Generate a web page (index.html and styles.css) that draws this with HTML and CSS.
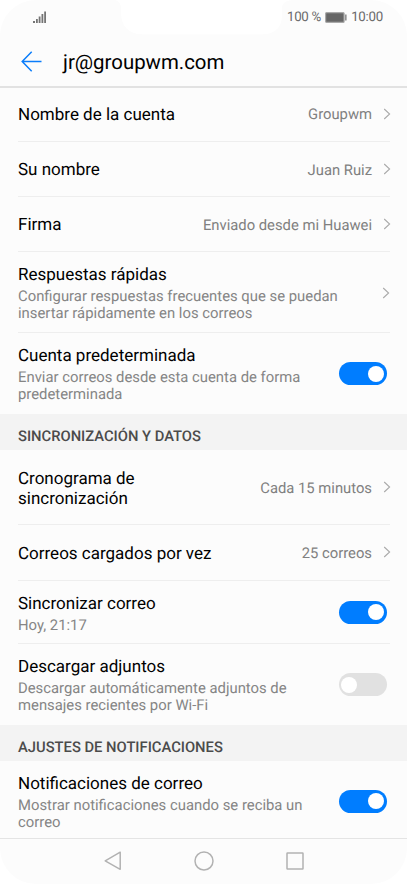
FILE: index.html
```html
<!DOCTYPE html>
<html lang="es">
<head>
<meta charset="utf-8">
<meta name="viewport" content="width=device-width, initial-scale=1">
<title>jr@groupwm.com</title>
<link rel="stylesheet" href="styles.css">
</head>
<body>
<svg class="defs" width="0" height="0" aria-hidden="true">
  <symbol id="chevron" viewBox="0 0 8 12"><path d="M1.2 1 L6.600 6 L1.2 11" fill="none" stroke="currentColor" stroke-width="1.1"/></symbol>
</svg>
<div class="phone">
  <header class="status">
    <svg class="notch" width="182" height="35" viewBox="0 0 182 35"><path d="M5 0 C9 1 11 4 11 9 V13 C11 26 19 34.300 32 34.300 H153 C166 34.300 172 26 172 15 V9 C172 4 174 1 182 0 Z" fill="#fff"/></svg>
    <svg class="signal" width="14" height="12" viewBox="0 0 14 12" fill="#757575"><path d="M0 10h2v2H0zM3 8h1.800v4H3zM5.700 5.500h1.800V12H5.700zM8.500 3h1.800v9H8.500zM11.200 .500h1.800V12h-1.800z"/></svg>
    <div class="status-right">
      <span class="percent">100 %</span>
      <svg class="battery" width="22" height="11" viewBox="0 0 22 11"><rect x=".6" y=".6" width="18.500" height="9.800" rx="1" fill="#666" stroke="#aaa" stroke-width="1.200"/><path d="M20.200 2.500h1.300v6h-1.300z" fill="#777"/></svg>
      <span class="clock">10:00</span>
    </div>
  </header>
  <div class="titlebar">
    <svg class="back" width="21" height="21" viewBox="0 0 21 21"><path d="M10.700 .8 L1.200 10.500 L10.700 20.200 M1.200 10.500 H20.500" fill="none" stroke="#0b7dfa" stroke-width="1.500"/></svg>
    <h1>jr@groupwm.com</h1>
  </div>
  <main>
    <div class="row first"><div class="label">Nombre de la cuenta</div><div class="value">Groupwm</div><svg class="chev"><use href="#chevron"/></svg></div>
    <div class="row"><div class="label">Su nombre</div><div class="value">Juan Ruiz</div><svg class="chev"><use href="#chevron"/></svg></div>
    <div class="row"><div class="label">Firma</div><div class="value">Enviado desde mi Huawei</div><svg class="chev"><use href="#chevron"/></svg></div>
    <div class="row tall"><div class="text"><div class="label">Respuestas rápidas</div><div class="desc">Configurar respuestas frecuentes que se puedan<br>insertar rápidamente en los correos</div></div><svg class="chev"><use href="#chevron"/></svg></div>
    <div class="row tall last"><div class="text"><div class="label">Cuenta predeterminada</div><div class="desc">Enviar correos desde esta cuenta de forma<br>predeterminada</div></div><div class="switch on"></div></div>
    <h2>SINCRONIZACIÓN Y DATOS</h2>
    <div class="row double"><div class="label">Cronograma de<br>sincronización</div><div class="value">Cada 15 minutos</div><svg class="chev"><use href="#chevron"/></svg></div>
    <div class="row single"><div class="label">Correos cargados por vez</div><div class="value">25 correos</div><svg class="chev"><use href="#chevron"/></svg></div>
    <div class="row medium"><div class="text"><div class="label">Sincronizar correo</div><div class="desc">Hoy, 21:17</div></div><div class="switch on"></div></div>
    <div class="row tall last"><div class="text"><div class="label">Descargar adjuntos</div><div class="desc">Descargar automáticamente adjuntos de<br>mensajes recientes por Wi-Fi</div></div><div class="switch"></div></div>
    <h2>AJUSTES DE NOTIFICACIONES</h2>
    <div class="row tall last bottom"><div class="text"><div class="label">Notificaciones de correo</div><div class="desc">Mostrar notificaciones cuando se reciba un<br>correo</div></div><div class="switch on"></div></div>
  </main>
  <nav>
    <svg width="18" height="20" viewBox="0 0 18 20"><path d="M16.200 1.200 V18.300 L1.200 9.800 Z"/></svg>
    <svg width="20" height="20" viewBox="0 0 20 20"><circle cx="10" cy="10" r="9"/></svg>
    <svg width="18" height="18" viewBox="0 0 18 18"><rect x="1" y="1" width="16" height="16" rx=".5"/></svg>
  </nav>
</div>
</body>
</html>
```
FILE: styles.css
```css
* { box-sizing: border-box; }
body { margin: 0; background: #fff; font-family: Roboto, sans-serif; text-rendering: geometricPrecision; }
.defs { display: block; height: 0; }
.phone { width: 407px; height: 884px; background: #fcfcfc; border-radius: 36px; overflow: hidden; display: flex; flex-direction: column; }
.status { position: relative; height: 35px; display: flex; justify-content: space-between; align-items: flex-start; padding: 0 24px 0 33px; color: #6a6a6a; font-size: 13.300px; line-height: 16px; letter-spacing: -0.25px; }
.notch { position: absolute; left: 110px; top: 0; width: 182px; height: 35px; }
.signal { margin-top: 11px; }
.status-right { display: flex; align-items: center; margin-top: 10px; }
.battery { margin: -2px 4px 0; }
.titlebar { height: 53px; border-bottom: 2px solid #e2e2e2; display: flex; align-items: center; padding-left: 21px; }
.back { margin-top: 1px; }
h1 { margin: 2px 0 0 21px; font-size: 20.400px; line-height: 24px; font-weight: 400; color: #000; }
.row { margin: 0 17px 0 18px; height: 55px; padding-top: 1px; border-bottom: 1px solid #eee; display: flex; align-items: center; }
.first { height: 54px; padding-top: 0; }
.first .value { margin-top: -1px; }
.single { height: 56px; }
.tall { height: 81px; }
.double { height: 75px; padding-top: 2px; }
.medium { height: 63px; padding-top: 0; }
.last { border-bottom: 0; padding-top: 0; }
.bottom { height: 77px; padding-top: 3px; }
.label { font-size: 17px; line-height: 20px; color: #000; white-space: nowrap; }
.row > .label { margin-top: 1px; }
.value { margin-left: auto; font-size: 14.800px; line-height: 20px; color: #808080; white-space: nowrap; }
.text { flex: 1; align-self: flex-start; padding-top: 13px; }
.tall:not(.last) .text { padding-top: 12px; }
.bottom .text { padding-top: 10px; }
.desc { margin-top: 2.500px; font-size: 14.850px; line-height: 17.500px; color: #858585; white-space: nowrap; }
.chev { width: 8px; height: 12px; margin: 0 0 0 11px; color: #aaa; flex: none; }
.value + .chev { margin: -2px -.5px 0 10.500px; }
.switch { width: 48px; height: 23px; border-radius: 12px; background: #e1e1e1; margin-right: 3.500px; padding: 3.500px 2.500px; display: flex; flex: none; }
.switch::before { content: ""; width: 16px; height: 16px; border-radius: 50%; background: #fff; }
.on { background: #007dff; justify-content: flex-end; }
h2 { margin: 0; height: 36px; background: #f3f3f3; padding: 8px 18px 0; font-size: 14.750px; line-height: 28px; font-weight: 500; color: #4b4b4b; white-space: nowrap; }
nav { flex: 1; border-top: 1px solid #e4e4e4; display: grid; grid-template-columns: 18px 20px 18px; column-gap: 72px; justify-content: center; align-items: center; padding-bottom: 1px; }
nav svg { fill: none; stroke: #b2b2b2; stroke-width: 1.500; stroke-linejoin: round; }
```
